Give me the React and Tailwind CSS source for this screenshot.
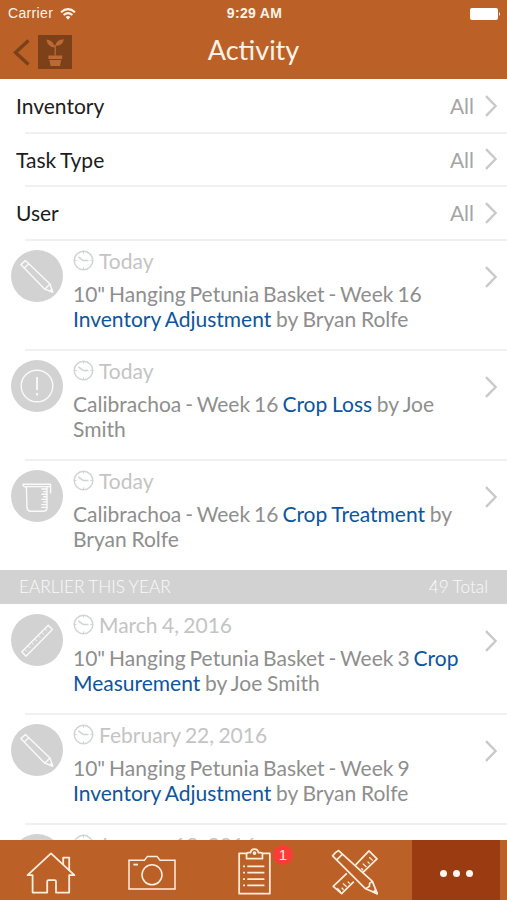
import React, { useState } from 'react';

const filters = [
  { label: 'Inventory', value: 'All' },
  { label: 'Task Type', value: 'All' },
  { label: 'User', value: 'All' },
];

const today = [
  { icon: 'pencil', date: 'Today', item: '10" Hanging Petunia Basket - Week 16', action: 'Inventory Adjustment', user: 'Bryan Rolfe' },
  { icon: 'alert', date: 'Today', item: 'Calibrachoa - Week 16', action: 'Crop Loss', user: 'Joe Smith' },
  { icon: 'beaker', date: 'Today', item: 'Calibrachoa - Week 16', action: 'Crop Treatment', user: 'Bryan Rolfe' },
];

const earlier = [
  { icon: 'ruler', date: 'March 4, 2016', item: '10" Hanging Petunia Basket - Week 3', action: 'Crop Measurement', user: 'Joe Smith' },
  { icon: 'pencil', date: 'February 22, 2016', item: '10" Hanging Petunia Basket - Week 9', action: 'Inventory Adjustment', user: 'Bryan Rolfe' },
  { icon: 'pencil', date: 'January 18, 2016', item: '10" Hanging Petunia Basket - Week 4', action: 'Inventory Adjustment', user: 'Bryan Rolfe' },
];

function Chevron() {
  return (
    <svg className="w-3 h-[22px] shrink-0" viewBox="0 0 12 22" fill="none" stroke="#c9c9cb" strokeWidth="2.4">
      <path d="M1 1.2 10.6 11 1 20.8" />
    </svg>
  );
}

function Clock() {
  return (
    <svg className="w-[21px] h-[21px] shrink-0" viewBox="0 0 21 21" fill="none" stroke="#d0d4d4" strokeWidth="1.5">
      <circle cx="10.5" cy="10.5" r="9.3" />
      <path d="M5.4 6.8 10.2 10.5H15.4" />
      <path d="M10.5 1v2.6M10.5 17.4V20M1 10.5h2.6M17.4 10.5H20" strokeWidth="1" />
    </svg>
  );
}

function TaskIcon({ type }) {
  return (
    <svg className="w-[52px] h-[52px] shrink-0" viewBox="0 0 52 52" fill="none" stroke="#fafafa" strokeWidth="1.4" strokeLinejoin="round">
      <circle cx="26" cy="26" r="26" fill="#d2d2d2" stroke="none" />
      {type === 'pencil' && (
        <>
          <path d="M9.8 14.6 14.4 10.6 39 34 41.6 42 33.8 39.2Z" />
          <path d="M13.2 18 17.8 13.8M33.8 39.2 39 34" />
          <path d="M38.8 41 41.6 42 40.8 39.2Z" fill="#fafafa" />
        </>
      )}
      {type === 'alert' && (
        <>
          <circle cx="26" cy="26" r="15.8" />
          <path d="M26 17v13" strokeWidth="1.8" />
          <path d="M26 33v2.4" strokeWidth="1.8" />
        </>
      )}
      {type === 'beaker' && (
        <>
          <path d="M11.6 14.2H39.6V23.6M11.6 14.2Q12.4 16.8 15.4 17.4L16 37.4Q16.2 41.2 19.8 41.2H32.4Q36 41.2 36 37.6V16.6H39.6M15 16.6H36" />
          <path d="M30.4 19H36M32.2 21.6H36M30.4 24.2H36M32.2 26.8H36M30.4 29.4H36M32.2 32H36M30.4 34.6H36M30.4 37.4H36" />
        </>
      )}
      {type === 'ruler' && (
        <>
          <path d="M10.8 37.8 37.2 11.2 41.4 15.6 15 42.2Z" />
          <path d="M16.4 38 14.8 36.4M20 34.8 17.6 32.4M23.2 31.2 21.6 29.6M26.8 28 24.4 25.6M30 24.4 28.4 22.8M33.6 21.2 31.2 18.8M36.8 17.6 35.2 16" transform="translate(-.8 -.8)" strokeWidth="1" />
        </>
      )}
    </svg>
  );
}

function ActivityRow({ icon, date, item, action, user }) {
  return (
    <div className="h-[110px] flex pl-[11px] shrink-0">
      <div className="pt-[10px]">
        <TaskIcon type={icon} />
      </div>
      <div className="ml-[10px] w-[394px] pt-2">
        <div className="flex items-center gap-[5px] h-[26px] text-[21px] text-[#c4c4c4]">
          <Clock />
          <span className="whitespace-nowrap [word-spacing:-1px]">{date}</span>
        </div>
        <p className="mt-[7px] text-[21px] leading-[25px] text-[#8e8e8e] [word-spacing:-0.7px]">
          <span className="[word-spacing:-1.4px]">{item} </span>
          <span className="text-[#0d559d]">{action}</span> by {user}
        </p>
      </div>
      <div className="ml-auto pr-[10px] pt-[26px]">
        <Chevron />
      </div>
    </div>
  );
}

function Divider() {
  return <div className="h-[2px] -mt-px -mb-px ml-[25px] bg-[#f0f0f0] shrink-0"></div>;
}

function ActivityList({ rows }) {
  return rows.map((row, i) => (
    <React.Fragment key={i}>
      {i > 0 && <Divider />}
      <ActivityRow {...row} />
    </React.Fragment>
  ));
}

function HomeIcon() {
  return (
    <svg className="w-[50px] h-[42px]" viewBox="0 0 50 42" fill="none" stroke="#ffeedd" strokeWidth="1.8" strokeLinejoin="round">
      <path d="M6.6 23.2H1.6L25 1.4 48.4 23.2H43.2V40.6H30V29.6Q30 28.2 28.6 28.2H22.6Q21.2 28.2 21.2 29.6V40.6H6.6Z" />
      <path d="M37.2 12.8V5.6H43.2V18.4" />
    </svg>
  );
}

function CameraIcon() {
  return (
    <svg className="w-[48px] h-[36px]" viewBox="0 0 48 36" fill="none" stroke="#ffeedd" strokeWidth="1.5">
      <path d="M1 5.2H16.4L19.4 1.4H29L32 5.2H47V34H1Z" />
      <circle cx="24" cy="19.8" r="10" />
      <path d="M5.4 9.6H10" strokeWidth="1.8" />
    </svg>
  );
}

function ClipboardIcon() {
  return (
    <svg className="w-[33px] h-[47px]" viewBox="0 0 34 48" fill="none" stroke="#ffeedd" strokeWidth="1.8" strokeLinejoin="round">
      <path d="M8.6 5.4H1.2V46.8H32.8V5.4H25.4" />
      <path d="M8.8 10.8V6.2Q8.8 4.6 10.4 4.6H13Q13.4 1 17 1T21 4.6H23.6Q25.2 4.6 25.2 6.2V10.8Z" />
      <circle cx="17" cy="5" r="1" />
      <path d="M9.6 18.8H27.2M9.6 25.2H27.2M9.6 31.8H27.2M9.6 38.2H27.2M5.2 18.8h2M5.2 25.2h2M5.2 31.8h2M5.2 38.2h2" />
    </svg>
  );
}

function ToolsIcon() {
  return (
    <svg className="w-[48px] h-[46px]" viewBox="0 0 48 46" fill="none" stroke="#ffeedd" strokeWidth="1.7" strokeLinejoin="round">
      <path d="M24.6 15.8 38 1.8 46 9.8 32 23.4M15.8 24.4 2.2 37.4 10.6 44.6 22.8 32.6" />
      <path d="M42.6 12.4 39 9M39.4 15.4 37.4 13.4M36.2 18.8 32.6 15.4M33 22 31 20M19.6 35.4 17.6 33.4M16.4 38.6 12.8 35.2M13.4 41.6 11.4 39.6M10.4 43.6 7 40" transform="translate(-.8 -.8)" strokeWidth="1.3" />
      <path d="M1.6 6.8Q4 3.4 7.6 1.6L41.4 32.4 46.2 44.6 34.6 39.8Z" />
      <path d="M5.6 10.8 11.6 5.2M34.6 39.8 38.4 37.4 38.6 34.4 41.4 32.4" />
      <path d="M42.4 43 46.2 44.6 44.8 41Z" fill="#ffeedd" />
    </svg>
  );
}

const tabs = [
  { id: 'home', icon: <HomeIcon />, cls: 'w-[101px] pt-[12px]' },
  { id: 'camera', icon: <CameraIcon />, cls: 'w-[102px] pt-[15px]' },
  { id: 'tasks', icon: <ClipboardIcon />, cls: 'w-[103px] pt-[8px]', badge: 1 },
  { id: 'tools', icon: <ToolsIcon />, cls: 'w-[97px] pt-[9px]' },
];

export default function App() {
  const [active, setActive] = useState('more');

  return (
    <div className="w-[507px] h-[900px] flex flex-col overflow-hidden bg-white font-['Lato',sans-serif]">
      <header className="h-[79px] shrink-0 bg-[#bb6128] text-[#fff3e6]">
        <div className="h-[27px] grid grid-cols-3 items-center pl-2 pr-[6px] font-['Liberation_Sans',sans-serif] text-[14px]">
          <div className="flex items-center gap-[7px]">
            <span className="tracking-[0.35px]">Carrier</span>
            <svg className="w-4 h-3" viewBox="0 0 16 12" fill="none" stroke="#fff3e6" strokeWidth="2">
              <path d="M1 4.2Q8-2 15 4.2M3.6 7Q8 3.2 12.4 7" />
              <path d="M5.6 9Q8 7 10.4 9L8 11.8Z" fill="#fff3e6" stroke="none" />
            </svg>
          </div>
          <span className="text-center font-bold text-[14px] tracking-[0.3px] whitespace-nowrap">9:29 AM</span>
          <svg className="w-[31px] h-3 justify-self-end" viewBox="0 0 31 12" fill="#fff">
            <rect x="0" y="0" width="28" height="12" rx="2" />
            <path d="M29 4Q31 6 29 8Z" />
          </svg>
        </div>
        <div className="h-[52px] grid grid-cols-3 items-center pl-3 pr-3">
          <div className="flex items-center gap-2 pb-[2px]">
            <svg className="w-[18px] h-[27px]" viewBox="0 0 18 27" fill="none" stroke="#7c4119" strokeWidth="3.4">
              <path d="M16.5 1.5 3.5 13.5 16.5 25.5" />
            </svg>
            <svg className="w-[34px] h-[34px]" viewBox="0 0 34 34">
              <rect width="34" height="34" fill="#7c4119" />
              <path d="M17.2 12.6Q15 5 8.4 4.4 9.4 11.8 17.2 12.6ZM17.2 10.4Q18.4 4.6 25.8 4.2 25 11 17.2 10.8Z" fill="#bb6a36" />
              <path d="M17.2 10V20.5" stroke="#bb6a36" strokeWidth="1.3" />
              <path d="M10.4 20.6H24.2V24H10.4ZM11.4 25H23.2L22 31H12.6Z" fill="#bb6a36" />
            </svg>
          </div>
          <h1 className="text-center text-[27px] leading-none pb-[8px]">Activity</h1>
        </div>
      </header>

      <main className="flex-1 min-h-0 overflow-hidden flex flex-col">
        {filters.map((f) => (
          <React.Fragment key={f.label}>
            <div className="h-[53.6px] shrink-0 flex items-center pl-[16px] pr-[10px] text-[21px]">
              <span className="text-[#1c1c1c] [word-spacing:-1px]">{f.label}</span>
              <span className="ml-auto mr-[11px] text-[#a5a5a5]">{f.value}</span>
              <Chevron />
            </div>
            <Divider />
          </React.Fragment>
        ))}
        <ActivityList rows={today} />
        <div className="h-[34px] shrink-0 flex items-center justify-between px-[19px] pt-px bg-[#d2d2d2] text-[17.3px] font-light text-[#fafafa] [word-spacing:-0.5px]">
          <span>EARLIER THIS YEAR</span>
          <span>49 Total</span>
        </div>
        <ActivityList rows={earlier} />
      </main>

      <nav className="h-[60px] shrink-0 flex bg-[#bb6128]">
        {tabs.map((t) => (
          <button key={t.id} onClick={() => setActive(t.id)} className={`relative flex justify-center items-start ${t.cls}`}>
            {t.icon}
            {t.badge && (
              <span className="absolute left-[70px] top-[5px] w-5 h-5 rounded-full bg-[#fb3b36] text-[#ffe9e0] text-[15px] leading-5 text-center font-['Liberation_Sans',sans-serif]">
                {t.badge}
              </span>
            )}
          </button>
        ))}
        <button
          onClick={() => setActive('more')}
          className={`ml-[9px] w-[88px] flex items-center justify-center gap-[6px] pt-[6px] ${active === 'more' ? 'bg-[#9b3b11]' : ''}`}
        >
          <span className="w-[7px] h-[7px] rounded-full bg-[#fff8f0]"></span>
          <span className="w-[7px] h-[7px] rounded-full bg-[#fff8f0]"></span>
          <span className="w-[7px] h-[7px] rounded-full bg-[#fff8f0]"></span>
        </button>
      </nav>
    </div>
  );
}
